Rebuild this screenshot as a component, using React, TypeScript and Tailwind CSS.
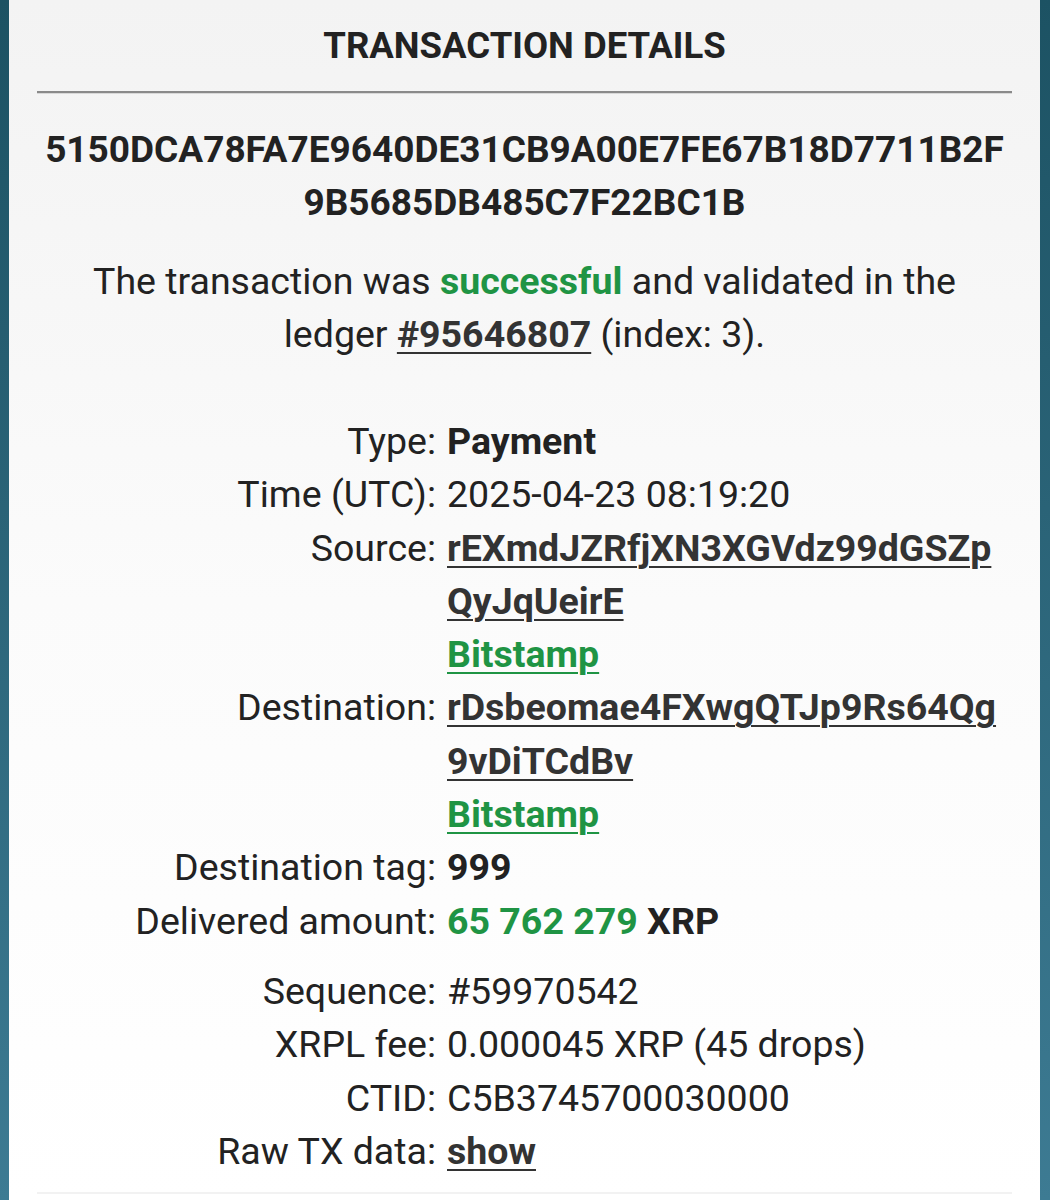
function Row({ label, children }: { label: string; children: React.ReactNode }) {
  return (
    <div className="flex">
      <div className="w-[438px] shrink-0 pr-[11px] text-right">{label}</div>
      <div className="w-[590px]">{children}</div>
    </div>
  );
}

function Addr({ lines, name }: { lines: string[]; name: string }) {
  return (
    <div className="flex flex-col items-start">
      {lines.map((l) => (
        <span key={l} className="font-bold text-[#333] underline decoration-2 underline-offset-[5px]">
          {l}
        </span>
      ))}
      <span className="font-bold text-[#1f9444] underline decoration-2 underline-offset-[5px]">{name}</span>
    </div>
  );
}

export default function App() {
  return (
    <div className="flex h-[1200px] w-[1050px] bg-gradient-to-b from-[#1c5263] to-[#3d7b93] font-['Roboto',sans-serif] text-[#222]">
      <div className="w-[9px] shrink-0" />
      <div className="flex w-[1031px] flex-col bg-gradient-to-b from-[#f3f3f3] via-[#fbfbfb] to-white">
        <h2 className="pt-[20px] text-center text-[36.5px] font-bold leading-[51px] text-[#222]">
          TRANSACTION DETAILS
        </h2>
        <div className="mx-[28px] mt-[20px] h-[3px] border-b border-[#d8d8d8] bg-[#8a8a8a]" />

        <div className="mt-[29px] text-center text-[37px] font-bold leading-[53px] text-[#222]">
          5150DCA78FA7E9640DE31CB9A00E7FE67B18D7711B2F
          <br />
          9B5685DB485C7F22BC1B
        </div>

        <p className="mt-[26px] text-center text-[37.5px] leading-[53px] text-[#222]">
          The transaction was <span className="font-bold text-[#1f9444]">successful</span> and validated in the
          <br />
          ledger{' '}
          <span className="font-bold text-[#333] underline decoration-2 underline-offset-[5px]">#95646807</span>{' '}
          (index: 3).
        </p>

        <div className="mt-[54px] text-[37.5px] leading-[53.3px] text-[#222]">
          <Row label="Type:">
            <span className="font-bold">Payment</span>
          </Row>
          <Row label="Time (UTC):">2025-04-23 08:19:20</Row>
          <Row label="Source:">
            <Addr lines={['rEXmdJZRfjXN3XGVdz99dGSZp', 'QyJqUeirE']} name="Bitstamp" />
          </Row>
          <Row label="Destination:">
            <Addr lines={['rDsbeomae4FXwgQTJp9Rs64Qg', '9vDiTCdBv']} name="Bitstamp" />
          </Row>
          <Row label="Destination tag:">
            <span className="font-bold">999</span>
          </Row>
          <Row label="Delivered amount:">
            <span className="font-bold text-[#1f9444]">65 762 279</span> <span className="font-bold">XRP</span>
          </Row>

          <div className="h-[17px]" />

          <Row label="Sequence:">#59970542</Row>
          <Row label="XRPL fee:">0.000045 XRP (45 drops)</Row>
          <Row label="CTID:">C5B3745700030000</Row>
          <Row label="Raw TX data:">
            <span className="font-bold text-[#333] underline decoration-2 underline-offset-[5px]">show</span>
          </Row>
        </div>
        <div className="mx-[28px] mt-auto mb-[6px] h-[2px] bg-[#f2f2f2]" />
      </div>
      <div className="w-[10px] shrink-0" />
    </div>
  );
}
